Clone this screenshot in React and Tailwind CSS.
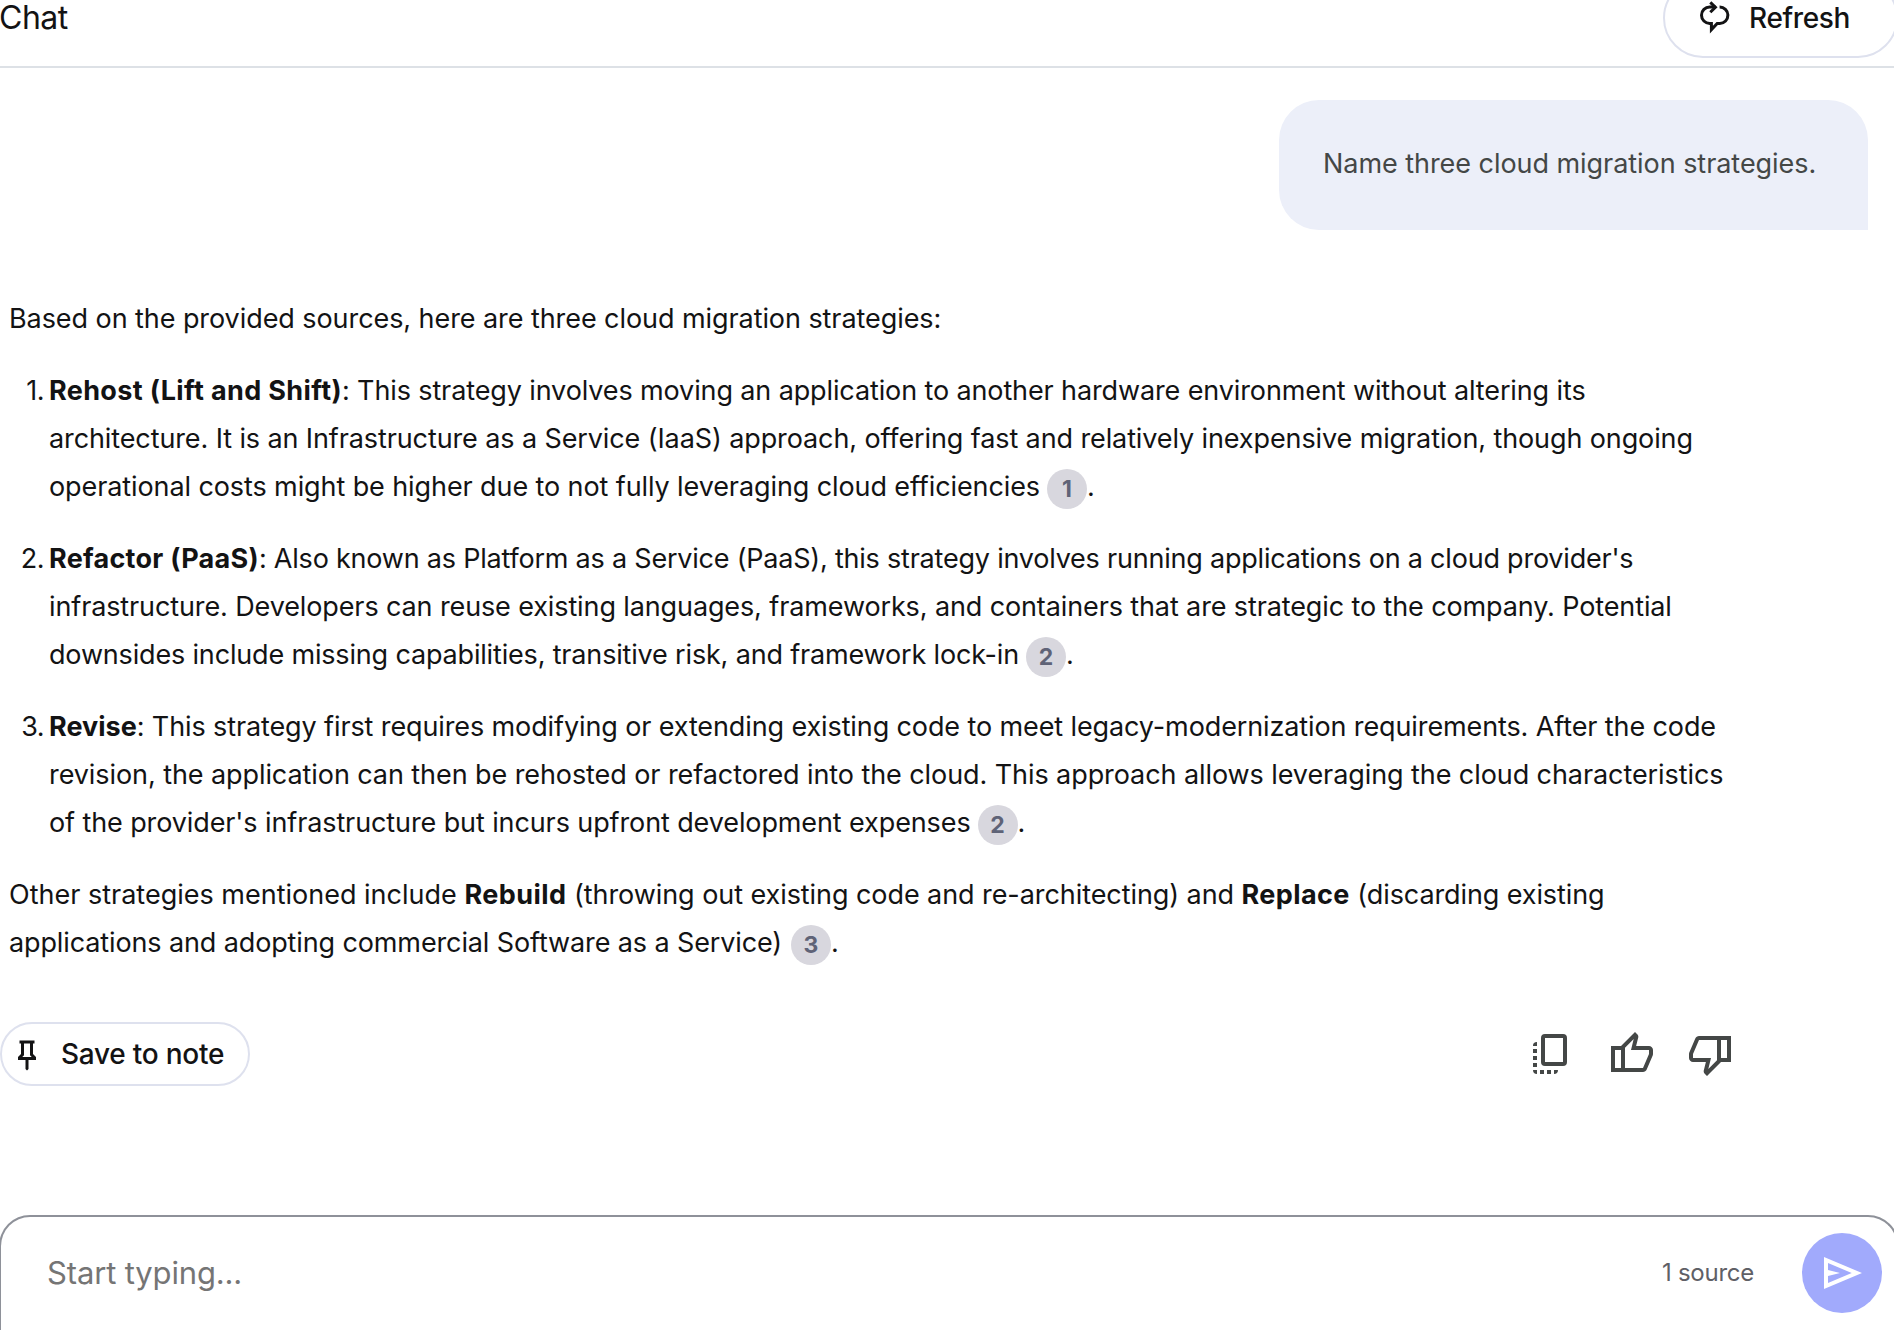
import React from "react";

function Badge({ n }) {
  return (
    <span className="mt-1 flex size-10 shrink-0 items-center justify-center rounded-full bg-[#d8d7de] text-[23px] leading-none font-bold text-[#5f6377]">
      {n}
    </span>
  );
}

function Line({ children }) {
  return <div className="flex h-12 items-center whitespace-pre">{children}</div>;
}

function Item({ n, children }) {
  return (
    <li className="flex">
      <span className="w-10 shrink-0 pr-[5px] text-right leading-[48px] tracking-[-0.5px]">{n}.</span>
      <div>{children}</div>
    </li>
  );
}

function Symbol({ d, className, viewBox = "0 -960 960 960" }) {
  return (
    <svg viewBox={viewBox} fill="currentColor" className={className} aria-hidden="true">
      <path d={d} />
    </svg>
  );
}

function RefreshIcon() {
  return (
    <svg viewBox="0 0 50 40" className="h-10 w-[50px]" fill="none" stroke="currentColor" strokeWidth="3" aria-hidden="true">
      <path d="M25.5 7H19.7A8.2 8.2 0 0 0 19.7 23.4H21.4V29.6L27.2 23.4H29.8A8.2 8.2 0 0 0 29.6 7" />
      <path d="M20.3 2.4L25.4 7.2L20.3 12.2" />
    </svg>
  );
}

function CopyIcon() {
  return (
    <svg viewBox="0 0 48 48" className="size-12" fill="currentColor" aria-hidden="true">
      <rect x="16" y="6" width="22" height="28" rx="2" fill="none" stroke="currentColor" strokeWidth="4" />
      <path d="M6 16v-0.5Q6 12 10 12v4ZM6 19h4v4H6ZM6 26h4v4H6ZM6 33h4v4H6ZM6 40h4v4Q6 44 6 40ZM13 40h4v4h-4ZM20 40h4v4h-4ZM27 40h4q0 4-4 4Z" />
    </svg>
  );
}

const THUMB_UP =
  "M720-120H280v-520l280-280 50 50q7 7 11.5 19t4.5 23v14l-44 174h258q32 0 56 24t24 56v80q0 7-2 15t-4 15L794-168q-9 20-30 34t-44 14Zm-360-80h360l120-280v-80H480l54-220-174 174v406Zm0-406v406-406Zm-80-34v80H160v360h120v80H80v-520h200Z";
const THUMB_DOWN =
  "M240-840h440v520L400-40l-50-50q-7-7-11.5-19t-4.5-23v-14l44-174H120q-32 0-56-24t-24-56v-80q0-7 2-15t4-15l120-282q9-20 30-34t44-14Zm360 80H240L120-480v80h360l-54 220 174-174v-406Zm0 406v-406 406Zm80 34v-80h120v-360H680v-80h200v520H680Z";
const PIN =
  "m640-480 80 80v80H520v240l-40 40-40-40v-240H240v-80l80-80v-280h-40v-80h400v80h-40v280Zm-286 80h252l-46-46v-314H400v314l-46 46Zm126 0Z";
const SEND =
  "M120-160v-640l760 320-760 320Zm80-120 474-200-474-200v140l240 60-240 60v140Zm0 0v-400 400Z";

export default function App() {
  return (
    <div className="flex h-[1330px] w-[1894px] flex-col overflow-hidden bg-white font-['Inter',sans-serif] text-[27px] text-[#131314]">
      <header className="flex h-[68px] shrink-0 items-start justify-between border-b-2 border-[#dde1e6]">
        <h1 className="-ml-px text-[32px] leading-[35px] tracking-[-0.5px]">Chat</h1>
        <button className="-mt-[22px] -mr-1 flex h-20 w-[235px] shrink-0 items-center rounded-full border-2 border-[#dee1ee] pl-[25px] text-[28px] leading-[36px] font-medium tracking-[-0.35px]">
          <span className="mt-1">
            <RefreshIcon />
          </span>
          <span className="ml-[9px]">Refresh</span>
        </button>
      </header>

      <main className="flex flex-1 flex-col">
        <div className="mt-8 mr-[26px] flex h-[130px] w-[589px] items-center self-end rounded-[40px] rounded-br-none bg-[#eceff9] pb-px pl-11 tracking-[-0.05px] whitespace-nowrap text-[#444746]">
          Name three cloud migration strategies.
        </div>

        <article className="mt-[65px] ml-[9px] flex flex-col gap-6">
          <Line>
            <span className="tracking-[-0.07px]">Based on the provided sources, here are three cloud migration strategies:</span>
          </Line>
          <ol className="flex flex-col gap-6">
            <Item n={1}>
              <Line>
                <b className="tracking-[0.35px]">Rehost (Lift and Shift)</b>
                <span className="tracking-[-0.12px]">: This strategy involves moving an application to another hardware environment without altering its</span>
              </Line>
              <Line>
                <span className="tracking-[-0.108px]">architecture. It is an Infrastructure as a Service (IaaS) approach, offering fast and relatively inexpensive migration, though ongoing</span>
              </Line>
              <Line>
                <span className="mr-[7px] tracking-[-0.098px]">operational costs might be higher due to not fully leveraging cloud efficiencies</span>
                <Badge n={1} />.
              </Line>
            </Item>
            <Item n={2}>
              <Line>
                <b className="tracking-[0.27px]">Refactor (PaaS)</b>
                <span className="tracking-[-0.215px]">: Also known as Platform as a Service (PaaS), this strategy involves running applications on a cloud provider's</span>
              </Line>
              <Line>
                <span className="tracking-[-0.118px]">infrastructure. Developers can reuse existing languages, frameworks, and containers that are strategic to the company. Potential</span>
              </Line>
              <Line>
                <span className="mr-[7px] tracking-[-0.17px]">downsides include missing capabilities, transitive risk, and framework lock-in</span>
                <Badge n={2} />.
              </Line>
            </Item>
            <Item n={3}>
              <Line>
                <b>Revise</b>
                <span className="tracking-[-0.114px]">: This strategy first requires modifying or extending existing code to meet legacy-modernization requirements. After the code</span>
              </Line>
              <Line>
                <span className="tracking-[-0.08px]">revision, the application can then be rehosted or refactored into the cloud. This approach allows leveraging the cloud characteristics</span>
              </Line>
              <Line>
                <span className="mr-[7px] tracking-[-0.108px]">of the provider's infrastructure but incurs upfront development expenses</span>
                <Badge n={2} />.
              </Line>
            </Item>
          </ol>
          <div>
            <Line>
              <span>{"Other strategies mentioned include "}</span>
              <b className="tracking-[0.45px]">Rebuild</b>
              <span className="tracking-[-0.07px]">{" (throwing out existing code and re-architecting) and "}</span>
              <b className="tracking-[0.4px]">Replace</b>
              <span className="tracking-[-0.1px]">{" (discarding existing"}</span>
            </Line>
            <Line>
              <span className="mr-[9px] tracking-[-0.122px]">applications and adopting commercial Software as a Service)</span>
              <Badge n={3} />.
            </Line>
          </div>
        </article>

        <div className="mt-[55px] flex items-center justify-between pr-[159px]">
          <button className="flex h-16 w-[250px] items-center rounded-full border-2 border-[#dee1ee] pl-[7px] text-[28px] font-medium tracking-[-0.25px] whitespace-nowrap">
            <Symbol d={PIN} className="-mt-px size-9" />
            <span className="ml-4">Save to note</span>
          </button>
          <div className="flex gap-8 text-[#444746]">
            <CopyIcon />
            <Symbol d={THUMB_UP} className="size-12" />
            <Symbol d={THUMB_DOWN} className="size-12" />
          </div>
        </div>
      </main>

      <footer className="-mr-[5px] -ml-px flex h-[115px] shrink-0 items-start rounded-t-[31px] border-2 border-b-0 border-[#8e9199] pt-4">
        <div className="flex h-20 flex-1 items-center">
          <span className="ml-[46px] flex-1 text-[31px] tracking-[-0.15px] text-[#757575]">Start typing...</span>
          <span className="mr-12 text-[24px] tracking-[-0.25px] text-[#5f6066]">1 source</span>
          <button className="mr-[15px] flex size-20 items-center justify-center rounded-full bg-[#a1aafc] text-white">
            <Symbol d={SEND} className="size-12" />
          </button>
        </div>
      </footer>
    </div>
  );
}
